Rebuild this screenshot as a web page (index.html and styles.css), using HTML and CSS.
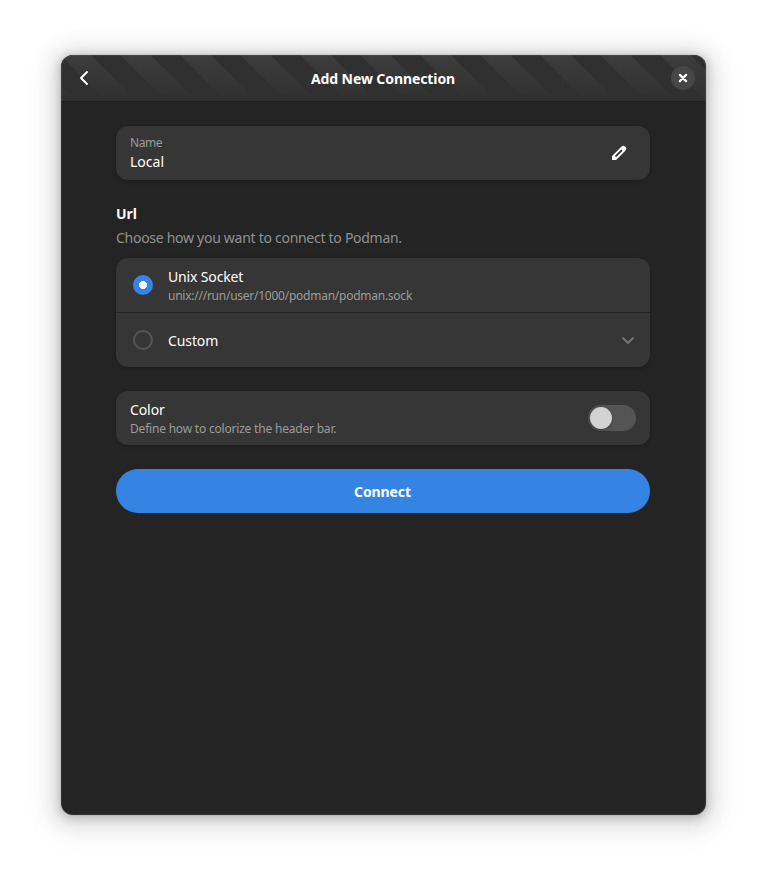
FILE: index.html
```html
<!DOCTYPE html>
<html lang="en">
<head>
<meta charset="utf-8">
<title>Add New Connection</title>
<link rel="stylesheet" href="styles.css">
</head>
<body>
<main class="window">
  <header class="headerbar">
    <button class="back" aria-label="Back"><svg width="16" height="16" viewBox="0 0 16 16"><path d="M11 2 5 8l6 6" fill="none" stroke="currentColor" stroke-width="2" stroke-linecap="round" stroke-linejoin="round"/></svg></button>
    <h1 class="title"><span>Add New Connection</span></h1>
    <button class="close" aria-label="Close"><svg width="16" height="16" viewBox="0 0 16 16"><path d="m4.900 4.900 6.200 6.200m0-6.200-6.200 6.200" fill="none" stroke="currentColor" stroke-width="2.300" stroke-linecap="round"/></svg></button>
  </header>
  <div class="content">
    <section class="card">
      <div class="row">
        <div class="labels"><span class="caption name">Name</span><span class="value local">Local</span></div>
        <svg class="edit" width="16" height="16" viewBox="0 0 16 16"><path fill="currentColor" fill-rule="evenodd" d="M10.300 1.700 1.600 10.400Q1 11 1 12V15H4Q5 15 5.600 14.400L14.300 5.700A2.800 2.800 0 0 0 10.300 1.700ZM10.200 4.400 11.600 5.800 5.600 11.800H4.200V10.400Z"/></svg>
      </div>
    </section>
    <h2 class="group-title">Url</h2>
    <p class="description"><span>Choose how you want to connect to Podman.</span></p>
    <section class="card">
      <div class="row radio-row lowered">
        <span class="radio checked"></span>
        <div class="labels"><span class="value socket">Unix Socket</span><span class="caption path">unix:///run/user/1000/podman/podman.sock</span></div>
      </div>
      <div class="row radio-row divided lowered">
        <span class="radio"></span>
        <div class="labels"><span class="value custom">Custom</span></div>
        <svg class="chevron" width="16" height="16" viewBox="0 0 16 16"><path d="m3 6 5 5 5-5" fill="none" stroke="currentColor" stroke-width="2" stroke-linecap="round" stroke-linejoin="round"/></svg>
      </div>
    </section>
    <section class="card color-card">
      <div class="row lowered">
        <div class="labels"><span class="value color">Color</span><span class="caption define">Define how to colorize the header bar.</span></div>
        <span class="switch"></span>
      </div>
    </section>
    <button class="connect"><span>Connect</span></button>
  </div>
</main>
</body>
</html>
```
FILE: styles.css
```css
* { box-sizing: border-box; }
body {
  margin: 0;
  padding: 55px 61px 67px;
  background: #fff;
  color: #fff;
  font: 14px/20px "Noto Sans", sans-serif;
}
button { border: 0; padding: 0; color: inherit; font: inherit; }
svg { display: block; flex: none; }
.window {
  height: 760px;
  overflow: hidden;
  border-radius: 12px;
  background: #242424;
  box-shadow: 0 2px 8px 2px rgba(0,0,0,.16), 0 3px 20px 10px rgba(0,0,0,.10), 0 6px 32px 16px rgba(0,0,0,.03), 0 0 0 1px rgba(0,0,0,.05);
  position: relative;
}
.window::after {
  content: "";
  position: absolute;
  inset: 0;
  border-radius: 12px;
  box-shadow: inset 0 0 0 1px rgba(255,255,255,.07);
  pointer-events: none;
}
.headerbar {
  display: grid;
  grid-template-columns: 34px 1fr 34px;
  align-items: center;
  height: 46px;
  padding: 0 6px;
  background:
    linear-gradient(rgba(48,48,48,0), #303030),
    repeating-linear-gradient(45deg, #3d3d3d 0 11.300px, #303030 11.300px 32.500px, #3d3d3d 32.500px 42.426px);
  box-shadow: 0 1px #1f1f1f;
}
.back { display: grid; place-items: center; height: 34px; background: none; }
.close {
  display: grid;
  place-items: center;
  justify-self: center;
  width: 24px;
  height: 24px;
  border-radius: 50%;
  background: #464646;
}
.title { margin: 2px 1px 0 0; text-align: center; font-size: 14px; line-height: 20px; font-weight: 700; letter-spacing: -.09px; }
.content { padding: 25px 56px 0 55px; }
.card { border-radius: 12px; background: #363636; box-shadow: 0 1px 3px 1px rgba(0,0,0,.12), 0 0 0 1px rgba(0,0,0,.03); }
.row { display: flex; align-items: center; height: 54px; padding: 0 14px; }
.labels { display: flex; flex: 1; flex-direction: column; align-items: flex-start; }
.lowered .labels { padding-top: 2px; }
.labels span { white-space: nowrap; }
.value { line-height: 20px; }
.caption { font-size: 12px; line-height: 18px; color: #9c9c9c; }
.name { letter-spacing: -.4px; }
.socket { letter-spacing: -.15px; }
.path { letter-spacing: -.25px; }
.define { letter-spacing: -.2px; }
.custom, .color { letter-spacing: -.1px; }
.edit { margin-right: 9px; }
.group-title { margin: 24px 0 4px; font-size: 14px; line-height: 20px; font-weight: 700; letter-spacing: -.1px; }
.description { margin: 0 0 10px; color: #919191; line-height: 20px; letter-spacing: -.28px; }
.radio-row { padding-left: 17px; gap: 15px; }
.divided { height: 55px; border-top: 1px solid #232323; padding-right: 14px; }
.radio { flex: none; width: 20px; height: 20px; border: 2px solid #565656; border-radius: 50%; }
.checked { border: 0; background: radial-gradient(circle, #fff 3.700px, #3584e4 4.300px); }
.chevron { color: #757575; }
.color-card { margin-top: 24px; }
.switch { width: 48px; height: 26px; padding: 2px; border-radius: 13px; background: #545454; }
.switch::before { content: ""; display: block; width: 22px; height: 22px; border-radius: 50%; background: #d2d2d2; box-shadow: 0 1px 3px rgba(0,0,0,.3); }
.connect { display: block; width: 100%; height: 44px; padding: 2px 1px 0 0; margin-top: 24px; border-radius: 22px; background: #3584e4; font-weight: 700; letter-spacing: -.1px; }
```
